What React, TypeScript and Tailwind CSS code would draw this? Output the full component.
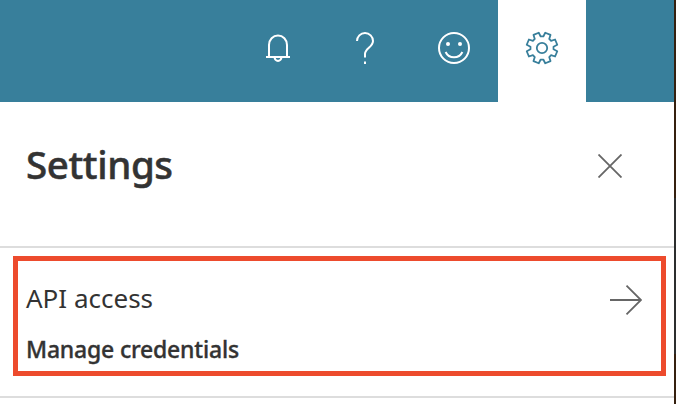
const toothAngles = [22.5, 67.5, 112.5, 157.5, 202.5, 247.5, 292.5, 337.5];

const gearPoints = toothAngles
  .flatMap((angle) =>
    [
      [-16, 11.6],
      [-10.5, 15.6],
      [10.5, 15.6],
      [16, 11.6],
    ].map(([offset, radius]) => {
      const t = ((angle + offset) * Math.PI) / 180;
      return `${(16 + radius * Math.sin(t)).toFixed(2)},${(16 - radius * Math.cos(t)).toFixed(2)}`;
    }),
  )
  .join(" ");

function BellIcon() {
  return (
    <svg width="24" height="30" viewBox="0 0 24 30" fill="none" stroke="currentColor" strokeWidth="2">
      <path d="M3 23V11a9 9.500 0 0 1 18 0v12M0 23h24M8.600 23.500a3.400 3.400 0 0 0 6.800 0" />
    </svg>
  );
}

function HelpIcon() {
  return (
    <svg className="mr-0.5" width="18" height="32" viewBox="0 0 18 32" fill="none" stroke="currentColor" strokeWidth="2">
      <path d="M1 9a8 8 0 0 1 16 0c0 6-8 7.500-8 13v3.500M9 29.500v2.500" />
    </svg>
  );
}

function SmileIcon() {
  return (
    <svg width="32" height="32" viewBox="0 0 32 32" fill="none" stroke="currentColor" strokeWidth="2">
      <circle cx="16" cy="16" r="15" />
      <circle cx="10" cy="12" r="2" fill="currentColor" stroke="none" />
      <circle cx="22" cy="12" r="2" fill="currentColor" stroke="none" />
      <path d="M7.600 20a9.300 9.300 0 0 0 16.800 0" />
    </svg>
  );
}

function GearIcon() {
  return (
    <svg className="overflow-visible" width="32" height="32" viewBox="0 0 32 32" fill="none" stroke="currentColor" strokeWidth="1.800">
      <polygon points={gearPoints} strokeLinejoin="round" />
      <circle cx="16" cy="16" r="5.200" />
    </svg>
  );
}

export default function App() {
  return (
    <div className="flex h-[404px] w-[676px] overflow-hidden bg-white font-['Noto_Sans','Open_Sans',sans-serif] text-[#333333]">
      <main className="w-[674px] shrink-0">
        <header className="flex h-[102px] bg-[#387f9b] pl-[234px] text-white">
          <button aria-label="Notifications" className="flex h-[98px] w-[88px] items-center justify-center"><BellIcon /></button>
          <button aria-label="Help" className="flex h-24 w-[88px] items-center justify-center"><HelpIcon /></button>
          <button aria-label="Feedback" className="flex h-24 w-[88px] items-center justify-center"><SmileIcon /></button>
          <button aria-label="Settings" className="flex w-[88px] items-center justify-center bg-white pb-1.5 text-[#387f9b]"><GearIcon /></button>
        </header>

        <div className="flex h-[144px] justify-between pr-[52px] pl-[26px]">
          <h1 className="pt-[34px] text-[38.500px] leading-[56px] font-medium tracking-[-0.400px] [-webkit-text-stroke:0.500px_#333333]">Settings</h1>
          <button aria-label="Close" className="mt-[52px] h-6 w-6 text-[#666666]">
            <svg width="24" height="24" viewBox="0 0 24 24" stroke="currentColor" strokeWidth="1.800">
              <path d="M.5.5 23.500 23.500M23.500.5.5 23.500" />
            </svg>
          </button>
        </div>

        <section className="h-[152px] border-y-2 border-[#dddddd] pt-2 pl-[13px]">
          <div className="flex h-[120px] w-[653px] justify-between border-5 border-[#ed4b2d] pr-[19px] pl-2">
            <div>
              <h2 className="pt-[19px] text-[26px] leading-9">API access</h2>
              <p className="pt-[17px] text-[23px] leading-8 font-medium tracking-[-0.200px] [-webkit-text-stroke:0.350px_#333333]">Manage credentials</p>
            </div>
            <svg className="mt-6 text-[#666666]" width="32" height="30" viewBox="0 0 32 30" fill="none" stroke="currentColor" strokeWidth="1.800">
              <path d="M0 15h31M16.500.7 31 15 16.500 29.300" />
            </svg>
          </div>
        </section>
      </main>
      <aside className="flex w-0.5 flex-col bg-[#35200f]">
        <div className="mt-[198px] h-[156px] bg-[#2c2e2e]" />
      </aside>
    </div>
  );
}
